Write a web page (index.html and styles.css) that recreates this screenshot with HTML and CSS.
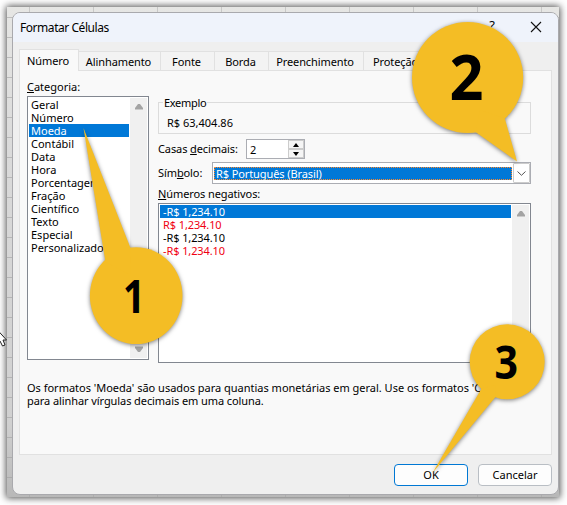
FILE: index.html
```html
<!DOCTYPE html>
<html lang="pt-BR">
<head>
<meta charset="utf-8">
<title>Formatar Células</title>
<link rel="stylesheet" href="styles.css">
</head>
<body>
<div class="sheet">
  <div class="dialog">
    <header class="titlebar">
      <span class="title">Formatar Células</span>
      <span class="help">?</span>
      <svg class="close" width="12" height="12" viewBox="0 0 12 12"><path d="M1 1L11 11M11 1L1 11"/></svg>
    </header>
    <nav class="tabs">
      <span class="tab active">Número</span>
      <span class="tab t-align">Alinhamento</span>
      <span class="tab t-font">Fonte</span>
      <span class="tab t-border">Borda</span>
      <span class="tab t-fill">Preenchimento</span>
      <span class="tab t-lock">Proteção</span>
    </nav>
    <main class="page">
      <div class="columns">
        <section class="category">
          <div class="label"><u>C</u>ategoria:</div>
          <div class="listbox cat-list">
            <div class="rows">
              <div>Geral</div><div>Número</div><div class="selected">Moeda</div><div>Contábil</div><div>Data</div><div>Hora</div><div>Porcentagem</div><div>Fração</div><div>Científico</div><div>Texto</div><div>Especial</div><div>Personalizado</div>
            </div>
            <div class="scroll">
              <svg width="10" height="7" viewBox="0 0 10 7"><path d="M1 6.5V5L4 1H6L9 5V6.5Z"/></svg>
              <svg width="10" height="7" viewBox="0 0 10 7"><path d="M1 .5V2L4 6H6L9 2V.5Z"/></svg>
            </div>
          </div>
        </section>
        <section class="details">
          <div class="sample"><span class="legend">Exemplo</span><span class="value">R$ 63,404.86</span></div>
          <div class="field decimals">
            <span class="caption">Casas <u>d</u>ecimais:</span>
            <div class="spinner"><span>2</span>
              <div class="steps">
                <i><svg width="6" height="4" viewBox="0 0 6 4"><path d="M0 4L3 0L6 4Z"/></svg></i>
                <i><svg width="6" height="4" viewBox="0 0 6 4"><path d="M0 0L3 4L6 0Z"/></svg></i>
              </div>
            </div>
          </div>
          <div class="field symbol">
            <span class="caption">Sím<u>b</u>olo:</span>
            <div class="select"><span class="choice">R$ Português (Brasil)</span>
              <i class="drop"><svg width="9" height="5" viewBox="0 0 9 5"><path d="M.5 .5L4.5 4.3L8.5 .5"/></svg></i>
            </div>
          </div>
          <div class="label neg-label"><u>N</u>úmeros negativos:</div>
          <div class="listbox neg-list">
            <div class="rows">
              <div class="selected">-R$ 1,234.10</div><div class="red">R$ 1,234.10</div><div>-R$ 1,234.10</div><div class="red">-R$ 1,234.10</div>
            </div>
            <div class="scroll">
              <svg width="10" height="7" viewBox="0 0 10 7"><path d="M1 6.5V5L4 1H6L9 5V6.5Z"/></svg>
            </div>
          </div>
        </section>
      </div>
      <p class="note">Os formatos 'Moeda' são usados para quantias monetárias em geral. Use os formatos 'Co<br><span class="note2">para alinhar vírgulas decimais em uma coluna.</span></p>
    </main>
    <footer class="buttons">
      <span class="button primary">OK</span>
      <span class="button">Cancelar</span>
    </footer>
  </div>
</div>
<svg class="callouts" width="567" height="505" viewBox="0 0 567 505">
  <path class="pointer" d="M-3 329.500V344L0 341L2.500 346L5 345L3 340H6.500L-3 329.500Z"/>
  <g class="balloon"><ellipse cx="136.200" cy="295.700" rx="46.300" ry="48.400"/><path d="M83.500 128L130.500 248L130 275L105.500 262Z"/></g>
  <g class="balloon"><circle cx="467.600" cy="77.500" r="55.600"/><path d="M517 161.500L475.500 132L480 110L504.800 118.500Z"/></g>
  <g class="balloon"><circle cx="507.200" cy="361.800" r="37.500"/><path d="M432.500 473L481.500 388.500L495 385L495.500 397Z"/></g>
  <text x="123" y="313" font-size="47" textLength="22" lengthAdjust="spacingAndGlyphs">1</text>
  <text x="449.500" y="100" font-size="63" textLength="34" lengthAdjust="spacingAndGlyphs">2</text>
  <text x="494.500" y="378.500" font-size="47" textLength="23.500" lengthAdjust="spacingAndGlyphs">3</text>
</svg>
</body>
</html>
```
FILE: styles.css
```css
* { box-sizing: border-box; }
body {
  margin: 0; width: 567px; height: 505px; padding: 7px; overflow: hidden; background: #fff;
  font: 11px/13px "Noto Sans", "Open Sans", sans-serif; color: #000;
}
i { font-style: normal; }
u { text-underline-offset: 1px; text-decoration-thickness: 1px; }
.sheet {
  width: 552px; height: 490px; padding: 5px 0 0 5px;
  background:
    repeating-linear-gradient(90deg, transparent 0 22px, #9b9b9b66 22px 23px, transparent 23px 64px),
    repeating-linear-gradient(180deg, transparent 0 10px, #9b9b9b88 10px 11px, transparent 11px 20px),
    linear-gradient(180deg, #e6e6e4 0, #dadada 30%, #d0d0d0 85%, #b8b8b8 100%);
  box-shadow: 0 0 7px 1px #000000b0;
}
.dialog {
  display: flex; flex-direction: column; width: 547px; height: 483px; padding: 0 6px 8px 6px;
  border: 1px solid #a9a9ad; border-radius: 8px; background: #efefef; overflow: hidden;
}
.titlebar {
  display: flex; align-items: center; flex: none; height: 29px; margin: 0 -6px;
  padding: 0 16px 0 7px; background: #eff3fb;
}
.title { margin-top: -1px; font-size: 12px; letter-spacing: -.45px; }
.help { margin-left: auto; margin-top: -5px; font-size: 13px; }
.close { margin: -2px 0 0 35px; fill: none; stroke: #111; stroke-width: 1.1; }
.tabs { display: flex; align-items: flex-end; flex: none; height: 28px; }
.tab {
  display: flex; align-items: center; justify-content: center; width: 54px; height: 19px; padding-right: 2px;
  border: 1px solid #e1e1e1; border-width: 1px 1px 0 0; background: #f3f3f3; letter-spacing: -.1px;
}
.tab.active {
  width: 60px; height: 22px; margin-bottom: -1px; padding: 0 2px 1px 0; border-left-width: 1px;
  background: #f9f9f9; position: relative;
}
.t-align { width: 82px; }
.t-fill { width: 95px; }
.t-lock { width: 66px; }
.page { flex: none; width: 533px; height: 385px; padding: 9px 8px 0 7px; border: 1px solid #e1e1e1; background: #f9f9f9; }
.columns { display: flex; justify-content: space-between; width: 504px; height: 283px; }
.category { width: 122px; }
.label { height: 16px; }
.listbox { display: flex; border: 1px solid #828790; background: #fff; padding: 1px; }
.cat-list { height: 264px; }
.rows { flex: 1; }
.rows div { height: 13px; padding-left: 2px; white-space: nowrap; }
.rows .selected { background: #0078d7; color: #fff; }
.rows .red { color: #f00012; }
.scroll {
  display: flex; flex-direction: column; align-items: center; justify-content: space-between;
  width: 17px; padding: 5px 0 5px; margin-left: 1px; background: #f0f0f0; fill: #a3a3a3;
}
.details { display: flex; flex-direction: column; width: 373px; padding-top: 22px; }
.sample { height: 32px; flex: none; border: 1px solid #dcdcdc; display: flex; flex-direction: column; align-items: flex-start; }
.legend { margin: -7px 0 0 4px; padding: 0 1px; background: #f9f9f9; letter-spacing: -.3px; }
.value { margin: 7px 0 0 8px; }
.field { display: flex; align-items: center; flex: none; }
.decimals { height: 20px; margin-top: 5px; }
.caption { width: 88px; white-space: nowrap; padding-bottom: 1px; letter-spacing: -.1px; }
.spinner { display: flex; align-items: center; width: 59px; height: 20px; border: 1px solid #abadb3; background: #fff; padding-left: 3px; }
.steps { display: flex; flex-direction: column; justify-content: space-between; margin-left: auto; height: 18px; }
.steps i { display: flex; align-items: center; justify-content: center; width: 16px; height: 9px; border: 1px solid #ccc; background: #f5f5f5; }
.symbol { height: 22px; margin-top: 3px; }
.symbol .caption { width: 54px; }
.select { display: flex; align-items: center; flex: 1; height: 22px; border: 1px solid #abadb3; background: #fff; padding-left: 1px; }
.choice { flex: 1; height: 13px; padding-left: 1px; line-height: 11px; letter-spacing: -.1px; border: 1px dotted #ff8728; background: #0078d7; color: #fff; }
.drop { display: flex; align-items: center; justify-content: center; width: 17px; height: 20px; margin-left: 1px; border: 1px solid #ccc; border-radius: 1px; }
.drop svg { fill: none; stroke: #555; }
.neg-label { margin-top: 3px; letter-spacing: -.1px; }
.neg-list { height: 160px; flex: none; }
.neg-list .rows div { padding-left: 3px; letter-spacing: -.1px; }
.note { margin: 18px 0 0; white-space: nowrap; letter-spacing: -.01px; }
.note2 { letter-spacing: -.08px; }
.buttons { display: flex; justify-content: flex-end; gap: 10px; margin-top: 9px; }
.button { display: flex; align-items: center; justify-content: center; width: 74px; height: 22px; padding-bottom: 2px; border: 1px solid #b9bec4; border-radius: 4px; background: #fdfdfd; }
.button.primary { border-color: #0078d4; }
.callouts { position: absolute; left: 0; top: 0; font-family: "Open Sans", sans-serif; font-weight: 700; }
.balloon { fill: #f4bd25; filter: drop-shadow(0 1px 2px #00000080); }
.pointer { fill: #fff; stroke: #222; stroke-width: 1; }
```
